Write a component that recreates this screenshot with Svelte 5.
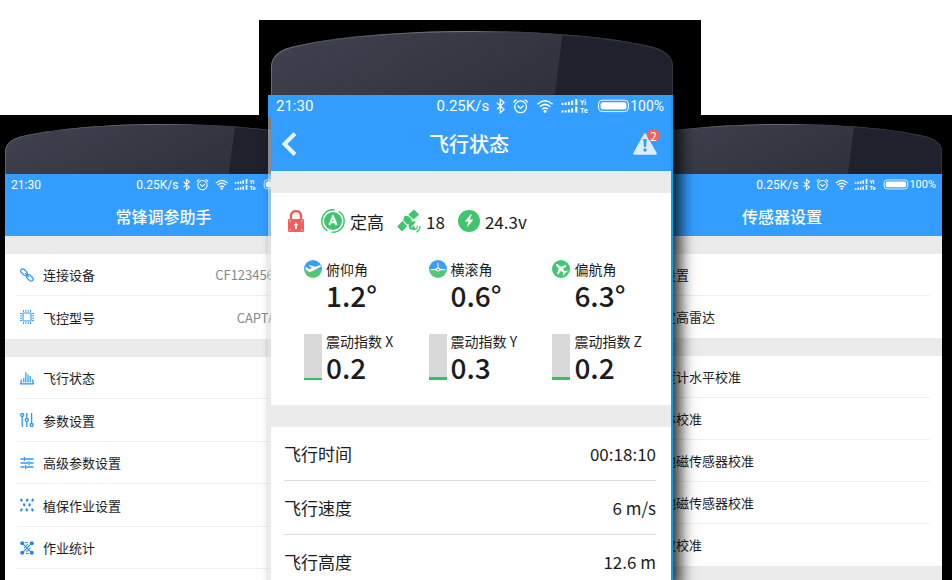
<script>
    let devices = [
        { icon: 'link', label: '连接设备', value: 'CF12345678900' },
        { icon: 'chip', label: '飞控型号', value: 'CAPTAIN 2.0' }
    ];

    let menu = [
        { icon: 'chart', label: '飞行状态' },
        { icon: 'sliders', label: '参数设置' },
        { icon: 'tune', label: '高级参数设置' },
        { icon: 'spray', label: '植保作业设置' },
        { icon: 'stats', label: '作业统计' }
    ];

    let modules = ['基本设置', '毫米定高雷达'];

    let calibrations = [
        '加速度计水平校准',
        '飞行体校准',
        '内置地磁传感器校准',
        '外置地磁传感器校准',
        '陀螺仪校准'
    ];

    let angles = [
        { icon: 'pitch', label: '俯仰角', value: '1.2°' },
        { icon: 'roll', label: '横滚角', value: '0.6°' },
        { icon: 'yaw', label: '偏航角', value: '6.3°' }
    ];

    let vibrations = [
        { label: '震动指数 X', value: '0.2', level: 4 },
        { label: '震动指数 Y', value: '0.3', level: 6 },
        { label: '震动指数 Z', value: '0.2', level: 7 }
    ];

    let flight = [
        { label: '飞行时间', value: '00:18:10' },
        { label: '飞行速度', value: '6 m/s' },
        { label: '飞行高度', value: '12.6 m' }
    ];
</script>

{#snippet bezel(id)}
    <svg class="bezel" viewBox="0 0 402 64" preserveAspectRatio="none" aria-hidden="true">
        <defs>
            <linearGradient id="{id}-light" x1="0" y1="0" x2="1" y2="0.3">
                <stop offset="0" stop-color="#40434f" />
                <stop offset="1" stop-color="#2d303a" />
            </linearGradient>
            <linearGradient id="{id}-edge" x1="0" x2="1">
                <stop offset="0" stop-color="#6b6d77" />
                <stop offset="0.15" stop-color="#4e515c" />
                <stop offset="0.5" stop-color="#777" />
                <stop offset="0.6" stop-color="#3c3f4a" />
                <stop offset="1" stop-color="#34363f" />
            </linearGradient>
            <clipPath id="{id}-clip">
                <path d="M0 64V36C0 25 9 19 20 16C60 6 130 0 202 0S342 6 382 16C393 19 402 25 402 36V64Z" />
            </clipPath>
        </defs>
        <g clip-path="url(#{id}-clip)">
            <rect width="402" height="64" fill="url(#{id}-light)" />
            <path d="M292 0H402V64H284Z" fill="#1f212d" />
            <path d="M0 64V36C0 25 9 19 20 16C60 6 130 0 202 0S342 6 382 16C393 19 402 25 402 36V64" fill="none" stroke="url(#{id}-edge)" stroke-width="2" />
        </g>
    </svg>
{/snippet}

{#snippet status(clock)}
    <div class="status">
        <span>{clock}</span>
        <span class="speed">0.25K/s</span>
        <svg class="signals" viewBox="0 0 134 16" aria-hidden="true">
            <g fill="none" stroke="#fff" stroke-width="1.3">
                <path d="M.8 4.6 8 11.4 4.3 14.6V1.4L8 4.6.8 11.4" />
                <circle cx="24.6" cy="8.8" r="5.9" />
                <path d="M21.6 7.8 24.6 10.4 27.6 7.4M17.6 4.6Q18.4 2.4 20.6 1.6M31.6 4.6Q30.8 2.4 28.6 1.6" />
                <path d="M41.4 6.2Q49 -.8 56.6 6.2M43.8 8.8Q49 4 54.2 8.8M46.2 11.2Q49 8.8 51.8 11.2" stroke-width="1.5" />
                <rect x="102.6" y="2.2" width="29.8" height="11.4" rx="3.6" stroke-width="1" />
            </g>
            <g fill="#fff">
                <circle cx="49" cy="13.2" r="1.5" />
                <path d="M65.5 5h2v2h-2zM68.7 4.6h2V7h-2zM71.9 3.8h2V7h-2zM75.1 2.6h2V7h-2zM79.2 1h2.2v6h-2.2z" />
                <path d="M65.5 12.6h2v2h-2zM68.7 12.2h2v2.4h-2zM71.9 11.4h2v3.2h-2zM75.1 10.2h2v4.4h-2zM79.2 8.6h2.2v6h-2.2z" />
                <rect x="104.6" y="4.2" width="25.8" height="7.4" rx="2" />
                <text x="84" y="7">Yi</text>
                <text x="84" y="15">Te</text>
            </g>
        </svg>
        <span class="charge">100%</span>
    </div>
{/snippet}

{#snippet icon(name)}
    <svg class="icon" viewBox="0 0 14 14" aria-hidden="true">
        {#if name === 'link'}
            <g fill="none" stroke="#2d97f5" stroke-width="1.2">
                <rect x="-3.8" y="-2.1" width="7.6" height="4.2" rx="2.1" transform="translate(4 4.2) rotate(45)" />
                <rect x="-3.8" y="-2.1" width="7.6" height="4.2" rx="2.1" transform="translate(9.8 9.8) rotate(45)" />
                <path d="M5 5l4 4" />
            </g>
        {:else if name === 'chip'}
            <rect x="3" y="3" width="8" height="8" rx=".6" fill="none" stroke="#2d97f5" stroke-width="1.1" />
            <path d="M3.5 0v1.8M5.8 0v1.8M8.2 0v1.8M10.5 0v1.8M3.5 12.2V14M5.8 12.2V14M8.2 12.2V14M10.5 12.2V14M0 3.5h1.8M0 5.8h1.8M0 8.2h1.8M0 10.5h1.8M12.2 3.5H14M12.2 5.8H14M12.2 8.2H14M12.2 10.5H14" stroke="#2d97f5" stroke-width="1" />
        {:else if name === 'chart'}
            <path d="M1.5 8.5.7 12.8H13.3L12.5 8.5" fill="none" stroke="#2d97f5" stroke-width="1.3" />
            <path d="M3.8 11.5V7M5.8 11.5V1.2M8 11.5V3.5M10.2 11.5V5" stroke="#2d97f5" stroke-width="1.2" />
        {:else if name === 'sliders'}
            <g fill="none" stroke="#2d97f5" stroke-width="1.3">
                <circle cx="2.2" cy="2" r="1.5" />
                <circle cx="6.8" cy="7" r="1.5" />
                <circle cx="11.6" cy="12" r="1.5" />
                <path d="M2.2 3.5V14M6.8 0v5.5M6.8 8.5V14M11.6 0v10.5" />
            </g>
        {:else if name === 'tune'}
            <path d="M.5 3h3M5.2 3H13.5M.5 7H8M10 7h3.5M.5 11H4.5M6.5 11h7M4.4 1v4M9 5v4M5.6 9v4" stroke="#2d97f5" stroke-width="1.3" />
        {:else if name === 'spray'}
            <path d="M1.2 1.6 1.6 2.6M7.4 1.6 7 2.6M12.8 1.6 12.4 2.6M4 6.4 4.4 7.4M9.8 6.4 9.4 7.4M1.6 11.4 1.2 12.4M6.6 11.4 7 12.4M12.2 11.4 12.6 12.4" stroke="#2186ee" stroke-width="2.1" stroke-linecap="round" fill="none" />
        {:else}
            <path d="M2 2 12 12M3.5 10.5 10.5 3.5M4 7.2 8 3.2M6.4 10.8 10.4 6.8M5 1.5h3M6 12.5h3" stroke="#2d97f5" stroke-width="1.1" />
            <g fill="#2186ee">
                <circle cx="2.2" cy="2.2" r="2" />
                <circle cx="11.8" cy="2.2" r="2" />
                <circle cx="2.2" cy="11.8" r="2" />
                <circle cx="11.8" cy="11.8" r="2" />
            </g>
        {/if}
    </svg>
{/snippet}

{#snippet dial(name)}
    <svg class="dial" viewBox="0 0 18 18" aria-hidden="true">
        {#if name === 'yaw'}
            <circle cx="9" cy="9" r="9" fill="#42c86f" />
            <g transform="rotate(-45 9 9)" fill="#fff">
                <path d="M9 2Q10.3 2.8 10.3 5V7L15 9.4V11L10.3 10.2 10 13 12 14.6V15.6L9 15 6 15.6V14.6L8 13 7.7 10.2 3 11V9.4L7.7 7V5Q7.7 2.8 9 2Z" />
            </g>
        {:else}
            <path d="M0 9a9 9 0 0 1 18 0z" fill="#3a9ef8" />
            <path d="M0 9a9 9 0 0 0 18 0z" fill="#50c878" />
            {#if name === 'pitch'}
                <path d="M1 7.6 2.6 7.2 5.2 9 8.2 8 4.6 5.8 6 5.2 11.4 6.8 14.8 5.4Q16.8 4.8 17 6 16.8 7 15 7.8L8.6 11 5.4 12.2 1.8 9.4Z" fill="#fff" />
            {:else}
                <path d="M9 2.6V9" stroke="#fff" stroke-width="1" />
                <path d="M1.4 9.4 9 8.2 16.6 9.4V10L9 10.4 1.4 10Z" fill="#fff" />
                <circle cx="9" cy="9.4" r="2" fill="#fff" />
                <circle cx="9" cy="9.4" r="1" fill="#ee5a52" />
            {/if}
        {/if}
    </svg>
{/snippet}

<main class="stage">
    <div class="floor"></div>

    <section class="phone side left">
        {@render bezel('left')}
        <div class="screen">
            <header>
                {@render status('21:30')}
                <div class="nav"><h2>常锋调参助手</h2></div>
            </header>
            <ul>
                {#each devices as item}
                    <li><a href="#{item.icon}">{@render icon(item.icon)}{item.label}<span class="value">{item.value}</span></a></li>
                {/each}
            </ul>
            <ul>
                {#each menu as item}
                    <li><a href="#{item.icon}">{@render icon(item.icon)}{item.label}</a></li>
                {/each}
            </ul>
        </div>
    </section>

    <section class="phone side right">
        {@render bezel('right')}
        <div class="screen">
            <header>
                {@render status('21:30')}
                <div class="nav"><h2>传感器设置</h2></div>
            </header>
            <ul>
                {#each modules as item}
                    <li><a href="#module">{item}</a></li>
                {/each}
            </ul>
            <ul>
                {#each calibrations as item}
                    <li><a href="#calibration">{item}</a></li>
                {/each}
            </ul>
            <div class="rest"></div>
        </div>
    </section>

    <div class="backdrop"></div>

    <section class="phone front">
        {@render bezel('front')}
        <div class="screen">
            <header>
                {@render status('21:30')}
                <div class="nav">
                    <button class="back" aria-label="返回">
                        <svg viewBox="0 0 16 24"><path d="M14 1.5 3.5 12 14 22.5" fill="none" stroke="#e9f4ff" stroke-width="4" /></svg>
                    </button>
                    <h1>飞行状态</h1>
                    <button class="alert" aria-label="警告">
                        <svg viewBox="0 0 24 22">
                            <path d="M12 1.4 22.6 20.6H1.4Z" fill="#dcedff" stroke="#dcedff" stroke-width="2.4" stroke-linejoin="round" />
                            <path d="M10.2 6h3.6l-.8 8h-2z" fill="#339eff" />
                            <circle cx="12" cy="17" r="1.7" fill="#339eff" />
                        </svg>
                        <span class="badge">2</span>
                    </button>
                </div>
            </header>

            <div class="panel">
                <div class="summary">
                    <svg class="lock" viewBox="0 0 16 22" aria-hidden="true">
                        <path d="M3 10V6a5 5 0 0 1 10 0v4" fill="none" stroke="#f0605c" stroke-width="2.4" />
                        <rect y="9" width="16" height="13" rx="1" fill="#f0605c" />
                        <path d="M8 12.4 10.4 15.2H9V19H7V15.2H5.6Z" fill="#fff" />
                        <path d="M1.4 11h1.4M13.2 11h1.4M1.4 20h1.4M13.2 20h1.4" stroke="#fff" stroke-width="1" />
                    </svg>
                    <span class="mode">
                        <svg viewBox="0 0 24 24" aria-hidden="true">
                            <circle cx="12" cy="12" r="11.2" fill="none" stroke="#3fc56c" stroke-width="1.4" stroke-dasharray="31 4.2" stroke-dashoffset="12" />
                            <circle cx="12" cy="12" r="9" fill="#3fc56c" />
                            <path d="M8.3 16 12 7.5 15.7 16M9.6 13.2h4.8" fill="none" stroke="#fff" stroke-width="2" />
                        </svg>
                        定高
                    </span>
                    <span class="satellite">
                        <svg viewBox="0 0 24 24" aria-hidden="true">
                            <g fill="#3fc56c">
                                <path d="M17 .5 22 5.5 16.6 10.6 11.4 5.4Z" />
                                <path d="M5.4 12 10.2 17 5 22.4.2 17.4Z" />
                                <path d="M7.6 6.8Q11 6.4 13.4 8.8 15.6 11 14.8 13.6L10.6 15.8 6.2 11.2Z" />
                                <path d="M11.6 15.8Q14 11.2 18.8 12.4L13.4 20.4Q11 18.4 11.6 15.8Z" />
                                <path d="M11.6 18.6Q14.4 22.4 19 20.4L16.4 16.6Z" />
                            </g>
                            <path d="M13.8 18.6 18.4 14.4" stroke="#fff" stroke-width="1" />
                            <path d="M20.4 16.6Q20.6 19.2 18.4 21M23 17Q23 21 19.4 23.2" fill="none" stroke="#3fc56c" stroke-width="1.2" />
                        </svg>
                        18
                    </span>
                    <span class="voltage">
                        <svg viewBox="0 0 22 22" aria-hidden="true">
                            <circle cx="11" cy="11" r="11" fill="#3fc56c" />
                            <path d="M12.6 4.4 6.8 11.6H10.4L9 17.4 15.4 9.6H11.6L13.8 4.4Z" fill="#fff" />
                        </svg>
                        24.3v
                    </span>
                </div>

                <div class="gauges">
                    {#each angles as item}
                        <div class="gauge">
                            {@render dial(item.icon)}
                            <div>
                                <div class="label">{item.label}</div>
                                <div class="reading">{item.value}</div>
                            </div>
                        </div>
                    {/each}
                    {#each vibrations as item}
                        <div class="gauge">
                            <div class="bar"><div class="level" style="height: {item.level}%"></div></div>
                            <div>
                                <div class="label">{item.label}</div>
                                <div class="reading">{item.value}</div>
                            </div>
                        </div>
                    {/each}
                </div>
            </div>

            <dl>
                {#each flight as item}
                    <div>
                        <dt>{item.label}</dt>
                        <dd>{item.value}</dd>
                    </div>
                {/each}
            </dl>
        </div>
    </section>
</main>

<style>
    :global(body){
        background-color: #fff;
    }
    .stage{
        display: grid;
        grid-template-columns: 5fr 254fr 12fr 51fr 300fr 51fr 28fr 241fr 10fr;
        grid-template-rows: 100vh;
        height: 100vh;
        overflow: hidden;
        font-family: "Noto Sans CJK SC", sans-serif;
        color: #1c1c1c;
    }
    .stage > *{
        grid-row: 1;
        min-width: 0;
    }
    .floor{
        grid-column: 1 / -1;
        margin-top: 115px;
        background-color: #000;
    }
    .backdrop{
        grid-column: 3 / 8;
        margin-top: 20px;
        height: 95px;
        background-color: #000;
    }
    .phone{
        display: flex;
        flex-direction: column;
    }
    .side{
        margin-top: 124px;
    }
    .left{
        grid-column: 2 / 5;
    }
    .right{
        grid-column: 6 / 9;
    }
    .front{
        grid-column: 4 / 7;
        margin-top: 31px;
        z-index: 1;
    }
    .bezel{
        display: block;
        flex: none;
        width: 100%;
        height: 64px;
        z-index: 1;
    }
    .side .bezel{
        height: 50px;
    }
    .screen{
        flex: 1;
        display: flex;
        flex-direction: column;
        background-color: #fff;
    }
    .front .screen{
        box-shadow: inset -2px 0 0 #08a5e8, -3px 0 0 rgba(250,250,250,.5), -3px 0 6px rgba(0,0,0,.1), 8px 0 14px rgba(0,0,0,.8);
    }
    .front header, .front .panel{
        margin-right: 2px;
    }
    header{
        background-color: #339eff;
        color: #fff;
    }
    .status{
        display: flex;
        align-items: center;
        height: 22px;
        padding: 0 7px 0 5px;
        font: 15px Roboto, sans-serif;
    }
    .front .status{
        box-shadow: -3px 0 0 #339eff;
    }
    .side .status{
        height: 21px;
        padding: 0 6px;
        font-size: 12px;
    }
    .speed{
        margin-left: auto;
    }
    .charge{
        font-size: 14px;
    }
    .side .charge{
        font-size: 11px;
    }
    .signals{
        width: 134px;
        height: 16px;
        margin: 0 0 0 7px;
    }
    .signals text{
        font: bold 7px Roboto, sans-serif;
    }
    .side .signals{
        width: 106px;
        height: 13px;
        margin: 0 0 0 5px;
    }
    .nav{
        display: grid;
        grid-template-columns: 1fr auto 1fr;
        align-items: center;
        height: 54px;
        padding: 0 14px 0 10px;
    }
    .side .nav{
        height: 41px;
        padding: 0;
    }
    h1, h2{
        grid-column: 2;
        margin: 0;
        font-size: 20px;
        font-weight: 500;
        line-height: 24px;
    }
    h2{
        font-size: 16px;
    }
    button{
        padding: 0;
        border: none;
        background: none;
        cursor: pointer;
    }
    button svg{
        display: block;
    }
    .back{
        justify-self: start;
    }
    .back svg{
        width: 16px;
        height: 24px;
    }
    .alert{
        position: relative;
        justify-self: end;
    }
    .alert svg{
        width: 24px;
        height: 22px;
    }
    .badge{
        position: absolute;
        top: -4px;
        right: -3px;
        width: 13px;
        height: 13px;
        border-radius: 50%;
        background-color: #f4605c;
        color: #fff;
        font: 12px/13px "Noto Sans CJK SC", sans-serif;
    }
    ul{
        margin: 0;
        padding: 0;
        list-style: none;
        border-top: 18px solid #ebebeb;
    }
    li{
        box-sizing: border-box;
        height: 42px;
        margin-left: 12px;
        border-bottom: 1px solid #f0f0f0;
    }
    .left li:nth-child(even){
        height: 43px;
    }
    .right li{
        margin-right: 12px;
    }
    .side ul:first-of-type li:last-child, .right li:last-child{
        border-bottom-color: transparent;
    }
    li a{
        display: flex;
        align-items: center;
        height: 100%;
        padding: 0 12px 0 3px;
        color: #1c1c1c;
        font-size: 13px;
        text-decoration: none;
    }
    .icon{
        width: 14px;
        height: 14px;
        margin-right: 9px;
    }
    .value{
        margin-left: auto;
        color: #888;
    }
    .rest{
        flex: 1;
        background-color: #ebebeb;
    }
    .panel{
        padding: 16px 29px 21px 16px;
        border: solid #ebebeb;
        border-width: 22px 0;
    }
    .summary{
        display: flex;
        align-items: center;
        gap: 13px;
        height: 24px;
        font-size: 17px;
    }
    .summary span{
        display: flex;
        align-items: center;
        gap: 5px;
    }
    .summary svg{
        width: 24px;
        height: 24px;
    }
    .summary .lock{
        width: 18px;
        height: 22px;
        margin-right: 3px;
    }
    .summary .voltage svg{
        width: 22px;
        height: 22px;
    }
    .gauges{
        display: grid;
        grid-template-columns: repeat(3, auto);
        justify-content: space-between;
        row-gap: 20px;
        margin-top: 27px;
        padding-left: 17px;
    }
    .gauge{
        display: flex;
        gap: 4px;
    }
    .dial{
        width: 18px;
        height: 18px;
    }
    .label{
        font-size: 14px;
        line-height: 18px;
        white-space: nowrap;
    }
    .reading{
        font-size: 28px;
        font-weight: 500;
        line-height: 34px;
    }
    .bar{
        display: flex;
        align-items: flex-end;
        width: 18px;
        height: 46px;
        margin-top: 2px;
        background-color: #d9d9d9;
    }
    .level{
        width: 100%;
        background-color: #33c462;
    }
    dl{
        margin: 0 17px 0 13px;
        font-size: 17px;
    }
    dl div{
        box-sizing: border-box;
        display: flex;
        align-items: center;
        justify-content: space-between;
        height: 54px;
        border-bottom: 1px solid #dcdcdc;
    }
    dd{
        margin: 0;
    }
</style>
